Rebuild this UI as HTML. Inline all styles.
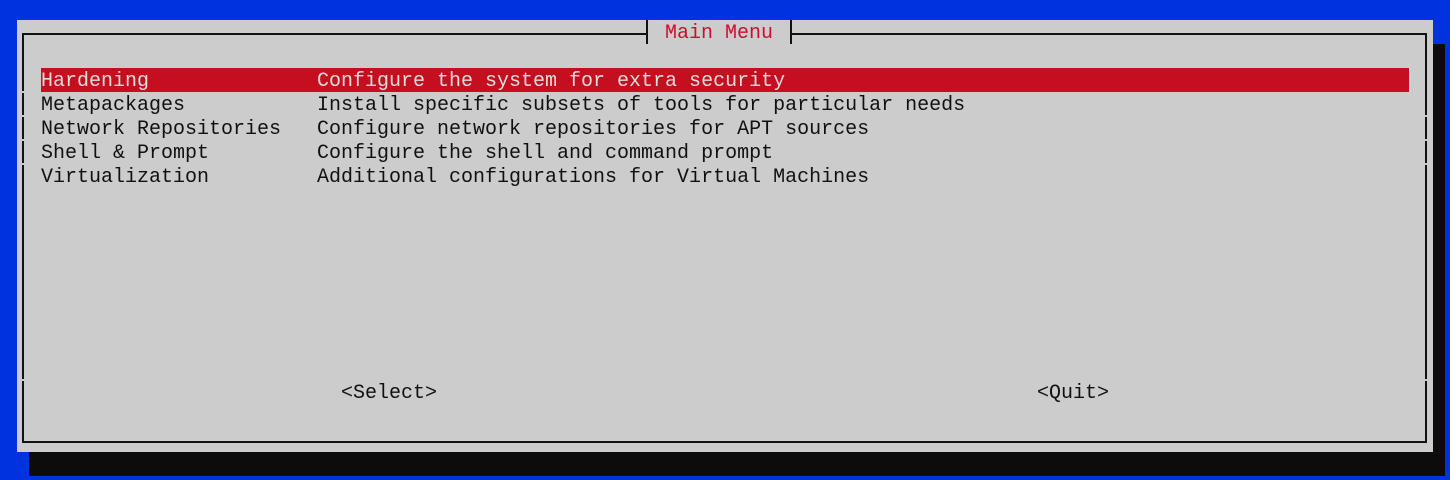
<!DOCTYPE html>
<html><head><meta charset="utf-8"><style>
html,body{margin:0;padding:0;}
body{width:1450px;height:480px;background:#0033dd;position:relative;overflow:hidden;font-family:"Liberation Mono",monospace;font-size:20px;}
.a{position:absolute;}
.t{position:absolute;line-height:24px;height:24px;padding-top:2px;box-sizing:border-box;white-space:pre;color:#111;}
</style></head><body>
<div class="a" style="left:29px;top:44px;width:1416px;height:432px;background:#0c0c0c"></div>
<div class="a" style="left:17px;top:20px;width:1416px;height:432px;background:#cccccc"></div>
<div class="a" style="left:22px;top:33px;width:1401px;height:406px;border:2px solid #111"></div>
<div class="a" style="left:648px;top:30px;width:143px;height:8px;background:#cccccc"></div>
<div class="a" style="left:646px;top:20px;width:2px;height:24px;background:#111"></div>
<div class="a" style="left:790px;top:20px;width:2px;height:24px;background:#111"></div>
<div class="t" style="left:665px;top:20px;color:#c8102e">Main Menu</div>
<div class="a" style="left:21px;top:91px;width:4px;height:2px;background:#ccc"></div>
<div class="a" style="left:21px;top:115px;width:4px;height:2px;background:#ccc"></div>
<div class="a" style="left:21px;top:139px;width:4px;height:2px;background:#ccc"></div>
<div class="a" style="left:21px;top:163px;width:4px;height:2px;background:#ccc"></div>
<div class="a" style="left:21px;top:379px;width:4px;height:2px;background:#ccc"></div>
<div class="a" style="left:1424px;top:115px;width:4px;height:2px;background:#ccc"></div>
<div class="a" style="left:1424px;top:139px;width:4px;height:2px;background:#ccc"></div>
<div class="a" style="left:1424px;top:163px;width:4px;height:2px;background:#ccc"></div>
<div class="a" style="left:1424px;top:379px;width:4px;height:2px;background:#ccc"></div>
<div class="a" style="left:41px;top:68px;width:1368px;height:24px;background:#c50f1f"></div>
<div class="t" style="left:41px;top:68px;color:#dddddd">Hardening</div>
<div class="t" style="left:317px;top:68px;color:#dddddd">Configure the system for extra security</div>
<div class="t" style="left:41px;top:92px">Metapackages</div>
<div class="t" style="left:317px;top:92px">Install specific subsets of tools for particular needs</div>
<div class="t" style="left:41px;top:116px">Network Repositories</div>
<div class="t" style="left:317px;top:116px">Configure network repositories for APT sources</div>
<div class="t" style="left:41px;top:140px">Shell &amp; Prompt</div>
<div class="t" style="left:317px;top:140px">Configure the shell and command prompt</div>
<div class="t" style="left:41px;top:164px">Virtualization</div>
<div class="t" style="left:317px;top:164px">Additional configurations for Virtual Machines</div>
<div class="t" style="left:341px;top:380px">&lt;Select&gt;</div>
<div class="t" style="left:1037px;top:380px">&lt;Quit&gt;</div>
</body></html>
